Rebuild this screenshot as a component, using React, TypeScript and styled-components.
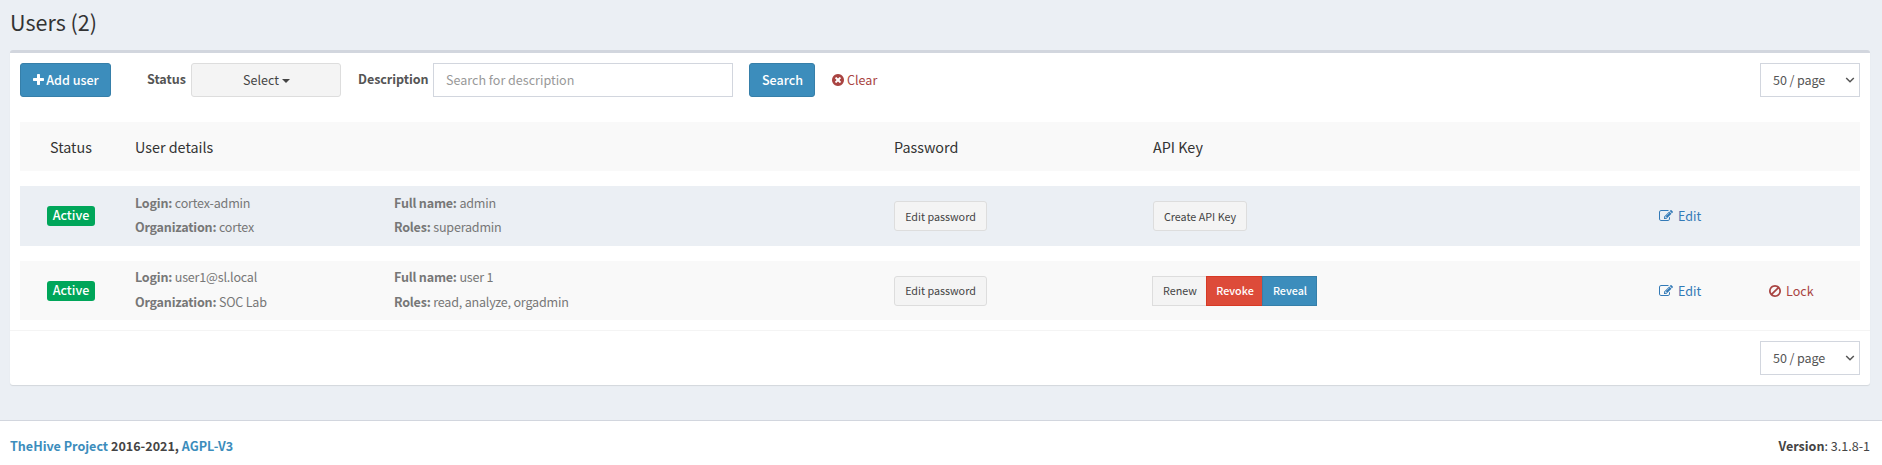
import React from "react";
import styled, { createGlobalStyle, css } from "styled-components";

const GlobalStyle = createGlobalStyle`
  *, *::before, *::after { box-sizing: border-box; }
  body {
    margin: 0;
    background: #ebeff4;
    color: #333;
    font-family: "Source Sans Pro", "Noto Sans CJK SC", "Noto Sans", sans-serif;
    font-size: 12.55px;
    line-height: 20px;
  }
  button, input { font-family: inherit; }
`;

const Page = styled.div`
  display: flex;
  flex-direction: column;
  height: 465px;
  overflow: hidden;
`;

const Title = styled.h1`
  margin: 9px 10px 15px;
  height: 26px;
  font-size: 21.5px;
  line-height: 26px;
  font-weight: 400;
`;

const Box = styled.section`
  margin: 0 12px 0 10px;
  width: 1860px;
  height: 335px;
  background: #fff;
  border-top: 3px solid #d2d6de;
  border-radius: 3px;
  box-shadow: 0 1px 1px rgba(0, 0, 0, 0.1);
`;

const Toolbar = styled.div`
  display: flex;
  align-items: center;
  padding: 10px 10px 25px;
`;

type Tone = "primary" | "danger" | "default";

const tones = {
  primary: css`
    background: #3c8dbc;
    border-color: #367fa9;
    color: #fff;
  `,
  danger: css`
    background: #dd4b39;
    border-color: #d73925;
    color: #fff;
  `,
  default: css`
    background: #f4f4f4;
    border-color: #ddd;
    color: #444;
  `,
};

const Button = styled.button<{ $tone: Tone; $width: number; $small?: boolean }>`
  display: inline-flex;
  align-items: center;
  justify-content: center;
  gap: 2px;
  flex: none;
  width: ${(p) => p.$width}px;
  height: ${(p) => (p.$small ? 30 : 34)}px;
  padding: ${(p) => (p.$small ? "1px 0 0" : "0 0 0 1px")};
  border: 1px solid;
  border-radius: 3px;
  font-size: ${(p) => (p.$small ? 10.75 : 12.55)}px;
  line-height: 20px;
  white-space: nowrap;
  ${(p) => tones[p.$tone]}
  ${(p) => p.$tone !== "default" && "font-weight: 500;"}
`;

const ButtonGroup = styled.div`
  display: flex;
  margin-left: -1px;
  ${Button} {
    border-radius: 0;
    padding: 0 0 0 1px;
  }
  ${Button} + ${Button} {
    margin-left: -1px;
  }
`;

const Label = styled.label<{ $before: number; $width: number }>`
  margin-left: ${(p) => p.$before}px;
  width: ${(p) => p.$width}px;
  padding-bottom: 2px;
  font-weight: 700;
  letter-spacing: -0.05px;
  color: #555;
  white-space: nowrap;
`;

const Caret = styled.span`
  margin: 2px 0 0 1px;
  border-top: 4px solid;
  border-left: 4px solid transparent;
  border-right: 4px solid transparent;
`;

const SearchInput = styled.input`
  width: 300px;
  height: 34px;
  margin-right: 16px;
  padding: 0 12px 2px;
  border: 1px solid #d2d6de;
  font-size: 12.55px;
  color: #555;
  &::placeholder {
    color: #999;
    opacity: 1;
  }
`;

const Action = styled.a<{ $danger?: boolean; $gap: number; $before?: number }>`
  display: inline-flex;
  align-items: center;
  gap: ${(p) => p.$gap}px;
  margin-left: ${(p) => p.$before ?? 0}px;
  color: ${(p) => (p.$danger ? "#a94442" : "#337ab7")};
`;

const PageSize = styled.div`
  display: flex;
  align-items: center;
  justify-content: space-between;
  width: 100px;
  height: 34px;
  margin-left: auto;
  padding: 0 4px 0 12px;
  border: 1px solid #d2d6de;
  color: #555;
  letter-spacing: -0.08px;
`;

const columns = css`
  display: grid;
  grid-template-columns: 115px 259px 500px 259px 506px 110px 1fr;
  align-items: center;
  margin: 0 10px;
`;

const HeaderRow = styled.div`
  ${columns}
  height: 49px;
  padding-top: 1px;
  background: #f9f9f9;
  font-size: 14.35px;
`;

const UserRow = styled.div<{ $active?: boolean }>`
  ${columns}
  margin-top: 15px;
  height: ${(p) => (p.$active ? 60 : 59)}px;
  background: ${(p) => (p.$active ? "#ebeff4" : "#f9f9f9")};
`;

const StatusCell = styled.div`
  display: flex;
  justify-content: center;
  width: 102px;
`;

const Badge = styled.span`
  width: 48px;
  height: 20px;
  border-radius: 3px;
  background: #00a65a;
  color: #fff;
  font-weight: 500;
  line-height: 18px;
  text-align: center;
`;

const Details = styled.div<{ $tight?: boolean }>`
  color: #777;
  line-height: ${(p) => (p.$tight ? 24 : 25)}px;
  padding-bottom: ${(p) => (p.$tight ? 2 : 4)}px;
  letter-spacing: -0.2px;
`;

const BoxFooter = styled.div`
  display: flex;
  margin-top: 10px;
  padding: 10px;
  border-top: 1px solid #f4f4f4;
`;

const PageFooter = styled.footer`
  display: flex;
  justify-content: space-between;
  margin-top: auto;
  height: 45px;
  padding: 15px 12px 0 10px;
  border-top: 1px solid #d2d6de;
  background: #fff;
  color: #444;
  a {
    color: #3c8dbc;
  }
`;

const paths = {
  plus: "M1600 736v192q0 40-28 68t-68 28h-416v416q0 40-28 68t-68 28h-192q-40 0-68-28t-28-68v-416h-416q-40 0-68-28t-28-68v-192q0-40 28-68t68-28h416v-416q0-40 28-68t68-28h192q40 0 68 28t28 68v416h416q40 0 68 28t28 68z",
  clear:
    "M1277 1122q0-26-19-45l-181-181 181-181q19-19 19-45 0-27-19-46l-90-90q-19-19-46-19-26 0-45 19l-181 181-181-181q-19-19-45-19-27 0-46 19l-90 90q-19 19-19 46 0 26 19 45l181 181-181 181q-19 19-19 45 0 27 19 46l90 90q19 19 46 19 26 0 45-19l181-181 181 181q19 19 45 19 27 0 46-19l90-90q19-19 19-46zm387-226q0 209-103 385.5t-279.5 279.5-385.5 103-385.5-103-279.5-279.5-103-385.5 103-385.5 279.5-279.5 385.5-103 385.5 103 279.5 279.5 103 385.5z",
  edit: "M888 1184l116-116-152-152-116 116v56h96v96h56zm440-720q-16-16-33 1l-350 350q-17 17-1 33t33-1l350-350q17-17 1-33zm80 594v190q0 119-84.5 203.5t-203.5 84.5h-832q-119 0-203.5-84.5t-84.5-203.5v-832q0-119 84.5-203.5t203.5-84.5h832q63 0 117 25 15 7 18 23 3 17-9 29l-49 49q-14 14-32 8-23-6-45-6h-832q-66 0-113 47t-47 113v832q0 66 47 113t113 47h832q66 0 113-47t47-113v-126q0-13 9-22l64-64q15-15 35-7t20 29zm-96-738l288 288-672 672h-288v-288zm444 132l-92 92-288-288 92-92q28-28 68-28t68 28l152 152q28 28 28 68t-28 68z",
  ban: "M1440 893q0-161-87-295l-754 753q137 89 297 89 111 0 211.5-43.5t173.5-116.5 116-174.5 43-212.5zm-999 299l755-754q-135-91-300-91-148 0-273 73t-198 199-73 274q0 162 89 299zm1223-299q0 157-61 300t-163.5 246-245 164-298.5 61-298.5-61-245-164-163.5-246-61-300 61-299.5 163.5-245.5 245-164 298.5-61 298.5 61 245 164 163.5 245.5 61 299.5z",
};

// Left edge and width of each glyph inside the 1792-unit em square.
const bounds = {
  plus: [192, 1408],
  clear: [128, 1536],
  edit: [0, 1792],
  ban: [128, 1536],
};

function Icon({ name }: { name: keyof typeof paths }) {
  const [left, width] = bounds[name];
  return (
    <svg width={width / 128} height={14} viewBox={`${left} 0 ${width} 1792`} fill="currentColor">
      <path d={paths[name]} />
    </svg>
  );
}

function PageSizeSelect() {
  return (
    <PageSize>
      50 / page
      <svg width="10" height="10" viewBox="0 0 10 10" fill="none" stroke="currentColor" strokeWidth="1.5">
        <path d="M1.2 3l3.8 3.8L8.8 3" />
      </svg>
    </PageSize>
  );
}

const users = [
  { login: "cortex-admin", org: "cortex", name: "admin", roles: "superadmin", hasKey: false, lockable: false },
  { login: "user1@sl.local", org: "SOC Lab", name: "user 1", roles: "read, analyze, orgadmin", hasKey: true, lockable: true },
];

export default function App() {
  return (
    <>
      <GlobalStyle />
      <Page>
        <Title>Users (2)</Title>
        <Box>
          <Toolbar>
            <Button $tone="primary" $width={91}>
              <Icon name="plus" />
              Add user
            </Button>
            <Label $before={36} $width={44}>Status</Label>
            <Button $tone="default" $width={150}>
              Select
              <Caret />
            </Button>
            <Label $before={17} $width={75}>Description</Label>
            <SearchInput placeholder="Search for description" />
            <Button $tone="primary" $width={66}>Search</Button>
            <Action $danger $gap={3} $before={17}>
              <Icon name="clear" />
              Clear
            </Action>
            <PageSizeSelect />
          </Toolbar>
          <HeaderRow>
            <StatusCell>Status</StatusCell>
            <span>User details</span>
            <span />
            <span>Password</span>
            <span>API Key</span>
          </HeaderRow>
          {users.map((u, i) => (
            <UserRow key={u.login} $active={i === 0}>
              <StatusCell>
                <Badge>Active</Badge>
              </StatusCell>
              <Details $tight={i === 0}>
                <div><b>Login:</b> {u.login}</div>
                <div><b>Organization:</b> {u.org}</div>
              </Details>
              <Details $tight={i === 0}>
                <div><b>Full name:</b> {u.name}</div>
                <div><b>Roles:</b> {u.roles}</div>
              </Details>
              <Button $tone="default" $small $width={93}>Edit password</Button>
              {u.hasKey ? (
                <ButtonGroup>
                  <Button $tone="default" $small $width={55}>Renew</Button>
                  <Button $tone="danger" $small $width={57}>Revoke</Button>
                  <Button $tone="primary" $small $width={55}>Reveal</Button>
                </ButtonGroup>
              ) : (
                <Button $tone="default" $small $width={94}>Create API Key</Button>
              )}
              <Action $gap={5}>
                <Icon name="edit" />
                Edit
              </Action>
              {u.lockable && (
                <Action $danger $gap={5}>
                  <Icon name="ban" />
                  Lock
                </Action>
              )}
            </UserRow>
          ))}
          <BoxFooter>
            <PageSizeSelect />
          </BoxFooter>
        </Box>
        <PageFooter>
          <b><a>TheHive Project</a> 2016-2021, <a>AGPL-V3</a></b>
          <span><b>Version</b>: 3.1.8-1</span>
        </PageFooter>
      </Page>
    </>
  );
}
